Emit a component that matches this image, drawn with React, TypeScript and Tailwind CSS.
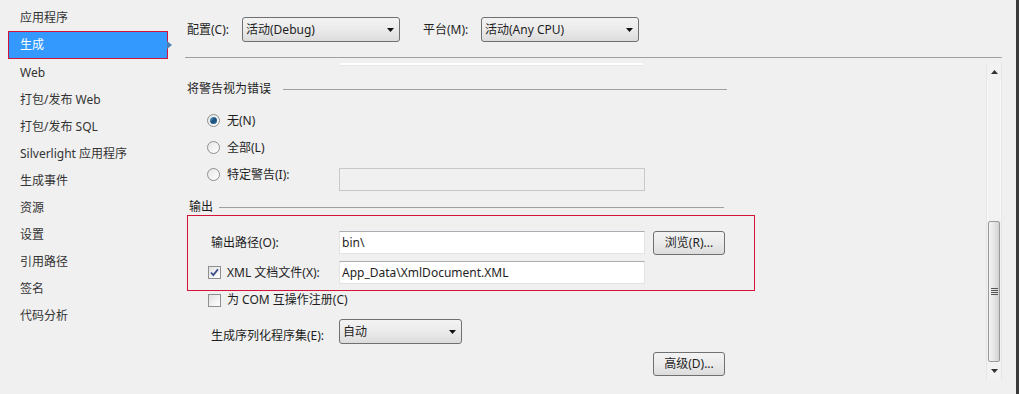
import React from 'react'

const font = { fontFamily: '"Noto Sans", "Noto Sans CJK SC", sans-serif' }

const navItems = [
  '应用程序',
  '生成',
  'Web',
  '打包/发布 Web',
  '打包/发布 SQL',
  'Silverlight 应用程序',
  '生成事件',
  '资源',
  '设置',
  '引用路径',
  '签名',
  '代码分析',
]

function Combo({ text, width }: { text: string; width: string }) {
  return (
    <div
      className={`${width} h-[25px] flex items-center justify-between rounded-[3px] border border-[#707070] bg-gradient-to-b from-[#f3f3f3] via-[#ebebeb] to-[#dcdcdc] pl-[3px] pr-[5px] text-[12px] text-[#1e1e1e]`}
    >
      <span>{text}</span>
      <svg width="7" height="4" viewBox="0 0 7 4">
        <path d="M0 0h7L3.5 4z" fill="#111" />
      </svg>
    </div>
  )
}

function Button({ text }: { text: string }) {
  return (
    <div className="w-[72px] h-[24px] flex items-center justify-center rounded-[3px] border border-[#707070] bg-gradient-to-b from-[#f3f3f3] via-[#ebebeb] to-[#dcdcdc] text-[12px] text-[#1e1e1e]">
      {text}
    </div>
  )
}

function TextBox({ text, disabled }: { text?: string; disabled?: boolean }) {
  return (
    <div
      className={`w-[306px] h-[23px] flex items-center px-[2px] border text-[12px] text-[#1e1e1e] ${
        disabled ? 'bg-[#f0f0f0] border-[#c9c9c9]' : 'bg-white border-[#e3e3e3] border-t-[#abadb3]'
      }`}
    >
      {text}
    </div>
  )
}

function Radio({ checked }: { checked?: boolean }) {
  return (
    <div className="w-[13px] h-[13px] rounded-full border border-[#8e8f8f] bg-gradient-to-br from-[#e6e6e6] to-[#ffffff] flex items-center justify-center">
      {checked && <div className="w-[7px] h-[7px] rounded-full bg-gradient-to-br from-[#6ab0de] via-[#1b4f7a] to-[#2c6a9c]" />}
    </div>
  )
}

function CheckBox({ checked }: { checked?: boolean }) {
  return (
    <div className="w-[13px] h-[13px] border border-[#8e8f8f] bg-gradient-to-br from-[#e2e2e2] to-[#ffffff] flex items-center justify-center">
      {checked && (
        <svg width="9" height="9" viewBox="0 0 9 9">
          <path d="M1 4.5l2.3 2.6L8 1.2" fill="none" stroke="#3a4f8a" strokeWidth="1.8" />
        </svg>
      )}
    </div>
  )
}

function GroupHeader({ title, lineWidth, gap, pad }: { title: string; lineWidth: string; gap: string; pad: string }) {
  return (
    <div className={`h-[16px] flex items-center ${pad}`}>
      <span className="text-[12px] text-[#1e1e1e]">{title}</span>
      <div className={`${gap} ${lineWidth} h-px bg-[#a0a0a0]`} />
    </div>
  )
}

function ScrollBar() {
  return (
    <div className="w-[16px] h-[317px] flex flex-col border-x border-[#e6e6e6] bg-[#f2f2f2]">
      <div className="h-[18px] flex items-center justify-center">
        <svg width="7" height="4" viewBox="0 0 7 4">
          <path d="M0 4h7L3.5 0z" fill="#333" />
        </svg>
      </div>
      <div className="h-[140px] border-x border-[#f9f9f9]" />
      <div className="h-[141px] mx-px rounded-[2px] border border-[#9a9a9a] bg-gradient-to-r from-[#f4f4f4] via-[#e6e6e6] to-[#d2d2d2] flex items-center justify-center">
        <div className="flex flex-col gap-[1px]">
          <div className="w-[7px] h-px bg-[#555]" />
          <div className="w-[7px] h-px bg-[#555]" />
          <div className="w-[7px] h-px bg-[#555]" />
          <div className="w-[7px] h-px bg-[#555]" />
        </div>
      </div>
      <div className="flex-1 flex items-center justify-center">
        <svg width="7" height="4" viewBox="0 0 7 4">
          <path d="M0 0h7L3.5 4z" fill="#333" />
        </svg>
      </div>
    </div>
  )
}

export default function App() {
  return (
    <div style={font} className="w-[1019px] h-[394px] bg-[#f0f0f0] flex overflow-hidden text-[#1e1e1e]">
      {/* Left navigation */}
      <div className="w-[185px] pt-[4px] flex flex-col">
        {navItems.map((item) =>
          item === '生成' ? (
            <div key={item} className="relative h-[28px] ml-[8px] w-[160px] border border-[#d2143a] bg-[#3399ff] text-white text-[12px] flex items-center pl-[11px]">
              {item}
              <svg className="absolute -right-[5px] top-[9px]" width="5" height="8" viewBox="0 0 5 8">
                <path d="M0 0l5 4-5 4z" fill="#4d7fb0" />
              </svg>
            </div>
          ) : (
            <div key={item} className="h-[27px] pl-[20px] flex items-center text-[12px] text-[#333]">
              {item}
            </div>
          )
        )}
      </div>

      {/* Main area */}
      <div className="w-[831px] flex flex-col">
        <div className="pt-[17px] h-[42px] flex items-center">
          <span className="ml-[2px] w-[55px] text-[12px]">配置(C):</span>
          <Combo text="活动(Debug)" width="w-[158px]" />
          <span className="ml-[23px] w-[58px] text-[12px]">平台(M):</span>
          <Combo text="活动(Any CPU)" width="w-[158px]" />
        </div>
        <div className="mt-[15px] w-[817px] h-px bg-[#a0a0a0] rounded-r-full" />

        <div className="mt-[5px] flex">
          <div className="w-[801px] h-[317px] flex flex-col">
            <div className="ml-[155px] w-[303px] h-[3px] bg-white border-b border-[#e6e6e6]" />

            <div className="mt-[15px]">
              <GroupHeader title="将警告视为错误" lineWidth="w-[444px]" gap="ml-[12px]" pad="pl-[2px]" />
            </div>

            <div className="mt-[10px] flex flex-col">
              <div className="h-[27px] flex items-center pl-[22px]">
                <Radio checked />
                <span className="ml-[7px] text-[12px]">无(N)</span>
              </div>
              <div className="h-[27px] flex items-center pl-[22px]">
                <Radio />
                <span className="ml-[7px] text-[12px]">全部(L)</span>
              </div>
              <div className="h-[27px] flex items-center pl-[22px]">
                <div className="w-[132px] flex items-center">
                  <Radio />
                  <span className="ml-[7px] text-[12px]">特定警告(I):</span>
                </div>
                <div className="mt-[9px]">
                  <TextBox disabled />
                </div>
              </div>
            </div>

            <div className="mt-[11px]">
              <GroupHeader title="输出" lineWidth="w-[505px]" gap="ml-[6px]" pad="pl-[4px]" />
            </div>

            {/* Highlighted output block */}
            <div className="ml-[2px] w-[568px] h-[76px] border border-[#d2143a] pt-[15px] flex flex-col gap-[7px]">
              <div className="h-[23px] flex items-center">
                <span className="w-[151px] pl-[23px] text-[12px]">输出路径(O):</span>
                <TextBox text="bin\" />
                <div className="ml-[8px]">
                  <Button text="浏览(R)..." />
                </div>
              </div>
              <div className="h-[23px] flex items-center">
                <div className="w-[151px] pl-[20px] flex items-center">
                  <CheckBox checked />
                  <span className="ml-[6px] text-[12px]">XML 文档文件(X):</span>
                </div>
                <TextBox text="App_Data\XmlDocument.XML" />
              </div>
            </div>

            <div className="h-[18px] pl-[23px] flex items-center">
              <CheckBox />
              <span className="ml-[6px] text-[12px]">为 COM 互操作注册(C)</span>
            </div>

            <div className="mt-[11px] h-[23px] flex items-center">
              <span className="w-[154px] pl-[26px] mt-[8px] text-[12px]">生成序列化程序集(E):</span>
              <Combo text="自动" width="w-[123px]" />
            </div>

            <div className="mt-[9px] ml-[468px]">
              <Button text="高级(D)..." />
            </div>
          </div>
          <ScrollBar />
        </div>
      </div>

      <div className="w-[3px] h-full bg-[#3a3a3a]" />
    </div>
  )
}
